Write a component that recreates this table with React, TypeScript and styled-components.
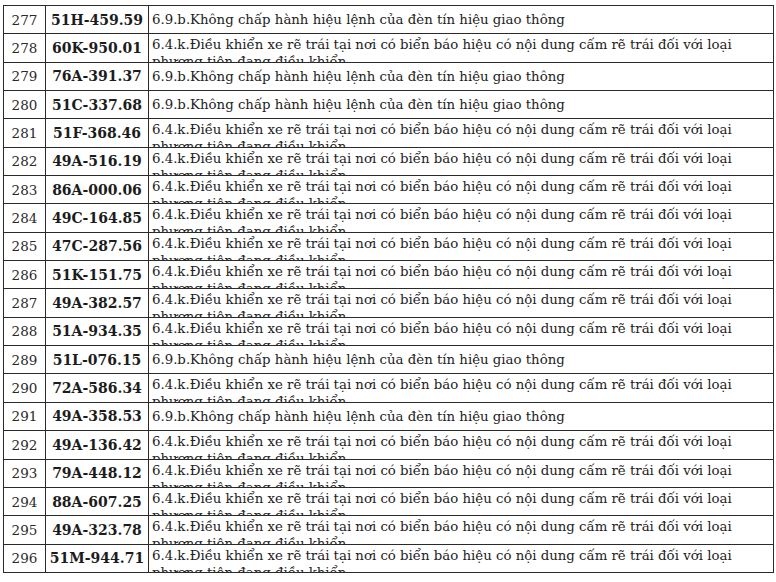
import styled, { createGlobalStyle } from "styled-components"

const GlobalStyle = createGlobalStyle`
    body {
        margin: 0;
        background: #fff;
        font-family: "DejaVu Serif", "Liberation Serif", serif;
        color: #222;
    }
`

const RULE_A = "6.9.b.Không chấp hành hiệu lệnh của đèn tín hiệu giao thông"
const RULE_B =
    "6.4.k.Điều khiển xe rẽ trái tại nơi có biển báo hiệu có nội dung cấm rẽ trái đối với loại phương tiện đang điều khiển"

type Violation = { no: number; plate: string; rule: "A" | "B" }

const VIOLATIONS: Violation[] = [
    { no: 277, plate: "51H-459.59", rule: "A" },
    { no: 278, plate: "60K-950.01", rule: "B" },
    { no: 279, plate: "76A-391.37", rule: "A" },
    { no: 280, plate: "51C-337.68", rule: "A" },
    { no: 281, plate: "51F-368.46", rule: "B" },
    { no: 282, plate: "49A-516.19", rule: "B" },
    { no: 283, plate: "86A-000.06", rule: "B" },
    { no: 284, plate: "49C-164.85", rule: "B" },
    { no: 285, plate: "47C-287.56", rule: "B" },
    { no: 286, plate: "51K-151.75", rule: "B" },
    { no: 287, plate: "49A-382.57", rule: "B" },
    { no: 288, plate: "51A-934.35", rule: "B" },
    { no: 289, plate: "51L-076.15", rule: "A" },
    { no: 290, plate: "72A-586.34", rule: "B" },
    { no: 291, plate: "49A-358.53", rule: "A" },
    { no: 292, plate: "49A-136.42", rule: "B" },
    { no: 293, plate: "79A-448.12", rule: "B" },
    { no: 294, plate: "88A-607.25", rule: "B" },
    { no: 295, plate: "49A-323.78", rule: "B" },
    { no: 296, plate: "51M-944.71", rule: "B" },
]

const Page = styled.div`
    padding: 5px 3px 0 3px;
`
const Table = styled.div`
    width: 771px;
    border: 1px solid #2a2a2a;
    border-bottom: none;
    box-sizing: border-box;
`
const Row = styled.div`
    display: grid;
    grid-template-columns: 42px 103px 1fr;
    height: 28.35px;
    border-bottom: 1px solid #2a2a2a;
    box-sizing: border-box;
`
const NoCell = styled.div`
    display: flex;
    align-items: center;
    justify-content: center;
    border-right: 1px solid #2a2a2a;
    font-size: 13.5px;
    color: #2a2a2a;
`
const PlateCell = styled.div`
    display: flex;
    align-items: center;
    justify-content: center;
    border-right: 1px solid #2a2a2a;
    font-size: 14px;
    font-weight: bold;
    color: #1c1c1c;
`
const RuleCell = styled.div<{ $multi: boolean }>`
    display: flex;
    align-items: ${(p) => (p.$multi ? "flex-start" : "center")};
    padding: ${(p) => (p.$multi ? "2px 3px 0 3px" : "0 3px")};
    overflow: hidden;
    font-size: 13.3px;
    line-height: 17px;
    color: #222;
`

export default function App() {
    return (
        <>
            <GlobalStyle />
            <Page>
                <Table>
                    {VIOLATIONS.map((v) => (
                        <Row key={v.no}>
                            <NoCell>{v.no}</NoCell>
                            <PlateCell>{v.plate}</PlateCell>
                            <RuleCell $multi={v.rule === "B"}>{v.rule === "A" ? RULE_A : RULE_B}</RuleCell>
                        </Row>
                    ))}
                </Table>
            </Page>
        </>
    )
}
